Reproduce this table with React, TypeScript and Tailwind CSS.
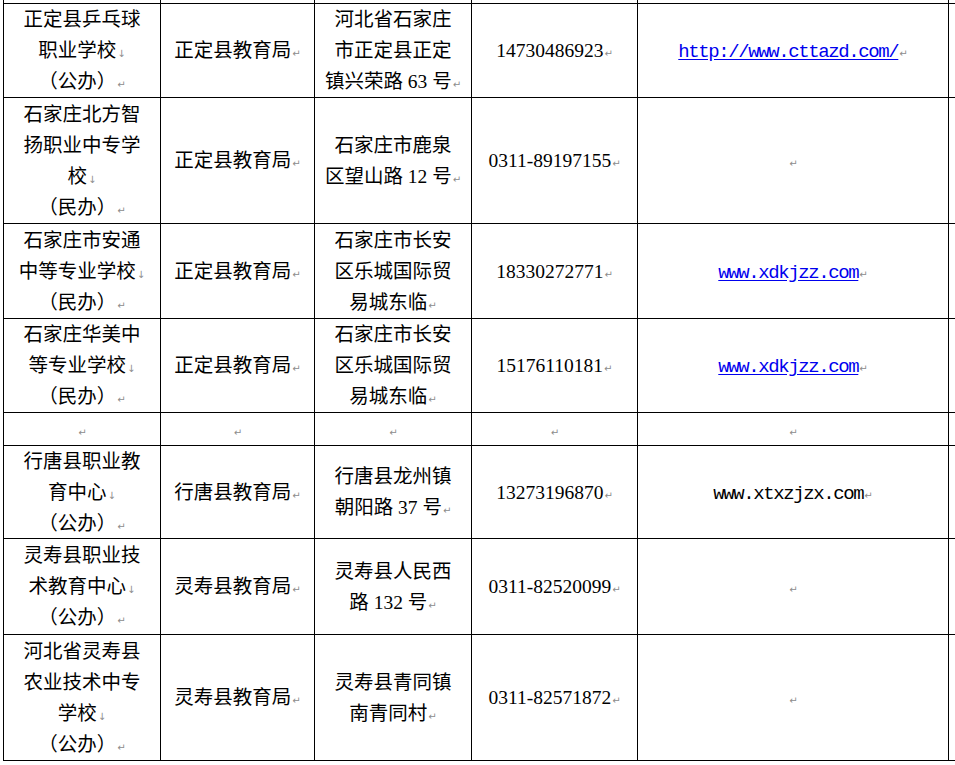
import React from "react";

type Mark = "p" | "b" | "";
type Ln = { t: string; m?: Mark };

const P: Mark = "p";
const B: Mark = "b";

function MarkGlyph({ m }: { m?: Mark }) {
  if (!m) return null;
  return (
    <span className="font-['DejaVu_Sans',sans-serif] text-[10px] leading-none text-[#8c8c8c] ml-[1px]">
      {m === "p" ? "↵" : "↓"}
    </span>
  );
}

function Lines({ lines }: { lines: Ln[] }) {
  return (
    <div className="flex flex-col items-center">
      {lines.map((l, i) => (
        <div key={i} className="whitespace-pre leading-[31px] h-[31px]">
          {l.t}
          <MarkGlyph m={l.m} />
        </div>
      ))}
    </div>
  );
}

type Row = {
  c1: Ln[];
  c2: Ln[];
  c3: Ln[];
  c4: string;
  c5: { t: string; link?: boolean } | null;
};

const rows: Row[] = [
  {
    c1: [{ t: "正定县乒乓球" }, { t: "职业学校", m: B }, { t: "（公办）", m: P }],
    c2: [{ t: "正定县教育局", m: P }],
    c3: [{ t: "河北省石家庄" }, { t: "市正定县正定" }, { t: "镇兴荣路 63 号", m: P }],
    c4: "14730486923",
    c5: { t: "http://www.cttazd.com/", link: true },
  },
  {
    c1: [{ t: "石家庄北方智" }, { t: "扬职业中专学" }, { t: "校", m: B }, { t: "（民办）", m: P }],
    c2: [{ t: "正定县教育局", m: P }],
    c3: [{ t: "石家庄市鹿泉" }, { t: "区望山路 12 号", m: P }],
    c4: "0311-89197155",
    c5: null,
  },
  {
    c1: [{ t: "石家庄市安通" }, { t: "中等专业学校", m: B }, { t: "（民办）", m: P }],
    c2: [{ t: "正定县教育局", m: P }],
    c3: [{ t: "石家庄市长安" }, { t: "区乐城国际贸" }, { t: "易城东临", m: P }],
    c4: "18330272771",
    c5: { t: "www.xdkjzz.com", link: true },
  },
  {
    c1: [{ t: "石家庄华美中" }, { t: "等专业学校", m: B }, { t: "（民办）", m: P }],
    c2: [{ t: "正定县教育局", m: P }],
    c3: [{ t: "石家庄市长安" }, { t: "区乐城国际贸" }, { t: "易城东临", m: P }],
    c4: "15176110181",
    c5: { t: "www.xdkjzz.com", link: true },
  },
  {
    c1: [{ t: "", m: P }],
    c2: [{ t: "", m: P }],
    c3: [{ t: "", m: P }],
    c4: "",
    c5: null,
  },
  {
    c1: [{ t: "行唐县职业教" }, { t: "育中心", m: B }, { t: "（公办）", m: P }],
    c2: [{ t: "行唐县教育局", m: P }],
    c3: [{ t: "行唐县龙州镇" }, { t: "朝阳路 37 号", m: P }],
    c4: "13273196870",
    c5: { t: "www.xtxzjzx.com" },
  },
  {
    c1: [{ t: "灵寿县职业技" }, { t: "术教育中心", m: B }, { t: "（公办）", m: P }],
    c2: [{ t: "灵寿县教育局", m: P }],
    c3: [{ t: "灵寿县人民西" }, { t: "路 132 号", m: P }],
    c4: "0311-82520099",
    c5: null,
  },
  {
    c1: [{ t: "河北省灵寿县" }, { t: "农业技术中专" }, { t: "学校", m: B }, { t: "（公办）", m: P }],
    c2: [{ t: "灵寿县教育局", m: P }],
    c3: [{ t: "灵寿县青同镇" }, { t: "南青同村", m: P }],
    c4: "0311-82571872",
    c5: null,
  },
];

function Cell({ children }: { children?: React.ReactNode }) {
  return (
    <div className="bg-white flex items-center justify-center text-center overflow-hidden">
      {children}
    </div>
  );
}

export default function App() {
  return (
    <div className="w-[955px] h-[765px] overflow-hidden bg-white text-black font-['Liberation_Serif','Noto_Sans_CJK_SC',serif] text-[19.5px]">
      <div className="ml-[3px] w-max bg-black px-px pb-px grid gap-px grid-cols-[156px_153px_156px_165px_310px_100px] grid-rows-[3px_93px_125px_94px_93px_32px_92px_95px_125px]">
        {Array.from({ length: 6 }).map((_, i) => (
          <div key={"top" + i} className="bg-white" />
        ))}
        {rows.map((r, i) => (
          <React.Fragment key={i}>
            <Cell>
              <Lines lines={r.c1} />
            </Cell>
            <Cell>
              <Lines lines={r.c2} />
            </Cell>
            <Cell>
              <Lines lines={r.c3} />
            </Cell>
            <Cell>
              <Lines lines={[{ t: r.c4, m: P }]} />
            </Cell>
            <Cell>
              {r.c5 ? (
                <div className="whitespace-pre leading-[31px] h-[31px]">
                  <span
                    className={
                      "font-['Liberation_Mono',monospace] text-[19px] tracking-[-1.4px] " +
                      (r.c5.link ? "text-[#0000ee] underline underline-offset-2" : "text-black")
                    }
                  >
                    {r.c5.t}
                  </span>
                  <MarkGlyph m={P} />
                </div>
              ) : (
                <Lines lines={[{ t: "", m: P }]} />
              )}
            </Cell>
            <Cell />
          </React.Fragment>
        ))}
      </div>
    </div>
  );
}
